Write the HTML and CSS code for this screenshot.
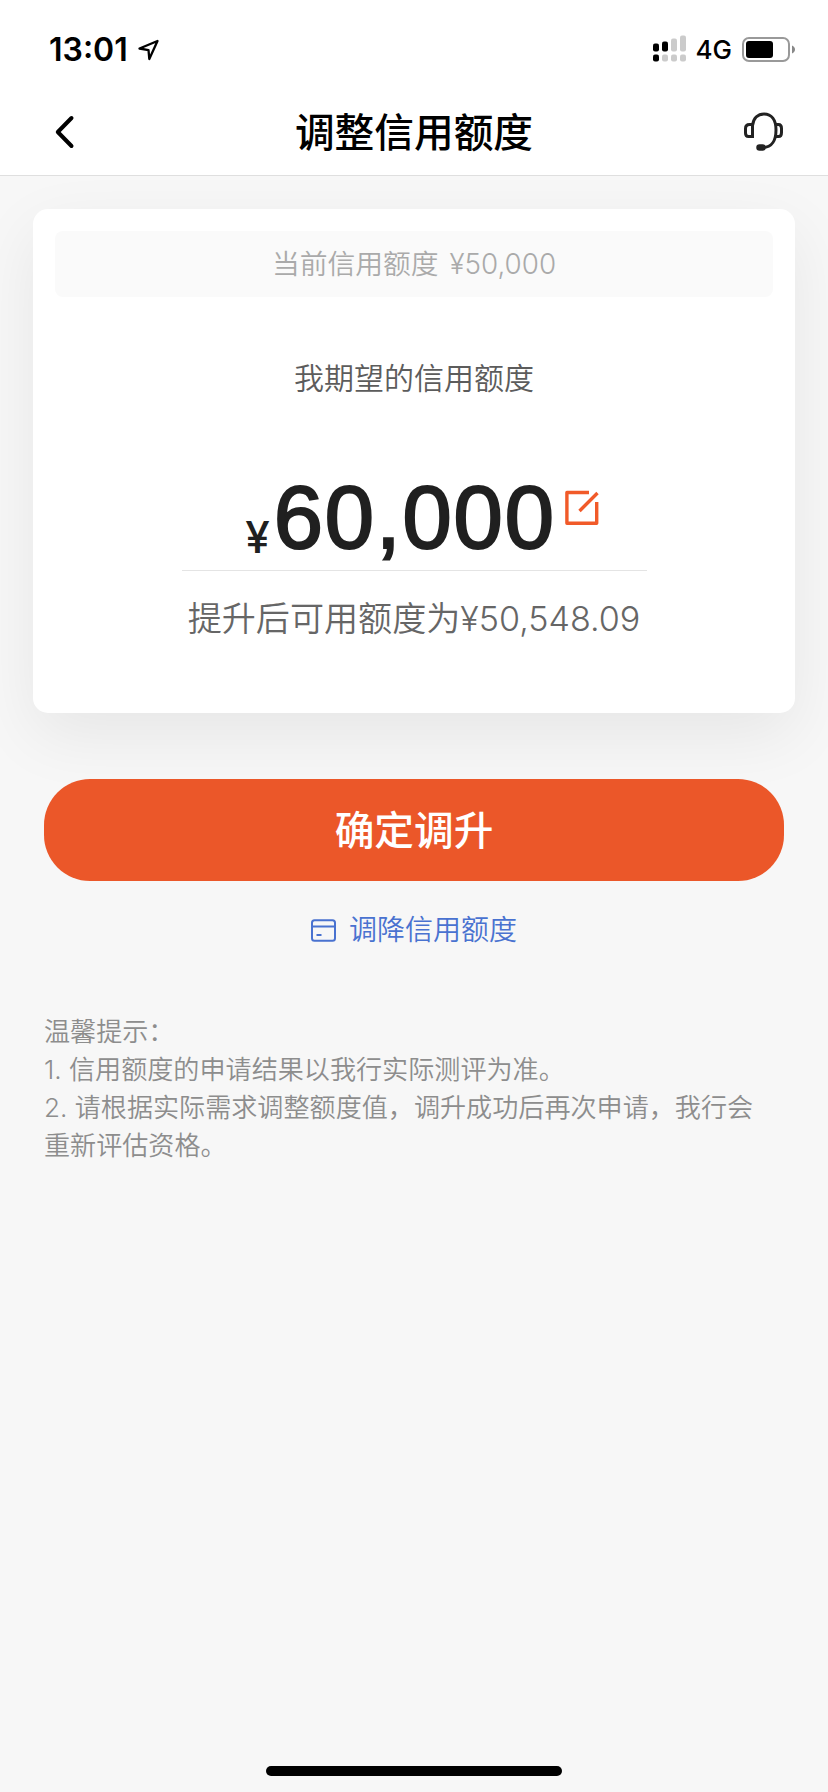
FILE: index.html
```
<!DOCTYPE html>
<html lang="zh-CN">
<head>
<meta charset="utf-8">
<title>调整信用额度</title>
<link rel="stylesheet" href="styles.css">
</head>
<body>
<div class="screen">
  <header class="top">
    <div class="status">
      <div class="status-left">
        <span class="time">13:01</span>
        <svg class="location" width="24" height="24" viewBox="0 0 24 24"><path d="M20.5 3 2.5 10.5 11.5 12.2 12.3 21Z" fill="none" stroke="#000" stroke-width="2.3" stroke-linejoin="round"/></svg>
      </div>
      <div class="status-right">
        <svg class="signal" width="34" height="27" viewBox="0 0 34 27">
          <g fill="#000"><rect x="0" y="8.5" width="6" height="8" rx="2"/><rect x="9" y="6.5" width="6" height="10" rx="2"/><rect x="0" y="19.5" width="6" height="7" rx="2"/></g>
          <g fill="#cbcbcb"><rect x="18" y="3.5" width="6" height="13" rx="2"/><rect x="27" y="0.5" width="6" height="16" rx="2"/><rect x="9" y="19.5" width="6" height="7" rx="2"/><rect x="18" y="19.5" width="6" height="7" rx="2"/><rect x="27" y="19.5" width="6" height="7" rx="2"/></g>
        </svg>
        <span class="network">4G</span>
        <svg width="54" height="26" viewBox="0 0 54 26"><rect x="1" y="1" width="46" height="23" rx="6" fill="none" stroke="#999" stroke-width="2"/><rect x="4" y="4" width="27" height="17" rx="3" fill="#000"/><path d="M50 8.5C54 10 54 15 50 16.5Z" fill="#888"/></svg>
      </div>
    </div>
    <nav class="nav">
      <svg class="back" width="22" height="34" viewBox="0 0 22 34"><path d="M18.5 3 4.8 17 18.5 31" fill="none" stroke="#000" stroke-width="4" stroke-linecap="round" stroke-linejoin="round"/></svg>
      <h1 class="title">调整信用额度</h1>
      <svg class="service" width="42" height="42" viewBox="0 0 42 42" fill="none" stroke="#222" stroke-width="3"><path d="M9.5 14.5C10.5 7 15 3 21 3 28.5 3 33 9 33 19 33 29 29 36.5 20 36.5"/><path d="M9.5 13.5H6.5Q2.5 13.5 2.5 17.5V22Q2.5 25.5 5.5 25.5H9.5Z"/><path d="M33 13.5H35.5Q38.5 13.5 38.5 17.5V21.5Q38.5 25.5 35.5 25.5H32.5"/><rect x="14" y="34" width="8" height="5" rx="2.5" fill="#222" stroke-width="1.5"/></svg>
    </nav>
  </header>
  <main class="content">
    <section class="card">
      <div class="current">当前信用额度 ¥50,000</div>
      <div class="label">我期望的信用额度</div>
      <div class="amount">
        <span class="currency">¥</span><span class="value">60,000</span>
        <svg class="edit" width="34" height="36" viewBox="0 0 34 36" fill="none" stroke="#f15a29" stroke-width="3.4" stroke-linecap="butt" stroke-linejoin="round"><path d="M24 2.5H1.9V33.2H31.7V12"/><path d="M14.5 21 32.5 3"/></svg>
      </div>
      <div class="available">提升后可用额度为¥50,548.09</div>
    </section>
    <button class="confirm">确定调升</button>
    <a class="lower"><svg width="25" height="23" viewBox="0 0 25 23" fill="none" stroke="#4972d0" stroke-width="2"><rect x="1" y="1.2" width="23" height="20.6" rx="2.5"/><path d="M1 7.5H24M5.5 16H10.5"/></svg><span>调降信用额度</span></a>
    <div class="tips">
      <p>温馨提示：</p>
      <p>1. 信用额度的申请结果以我行实际测评为准。</p>
      <p>2. 请根据实际需求调整额度值，调升成功后再次申请，我行会重新评估资格。</p>
    </div>
  </main>
  <div class="home-bar"></div>
</div>
</body>
</html>
```
FILE: styles.css
```
* { box-sizing: border-box; }
body {
  margin: 0;
  background: #f7f7f7;
  font-family: Inter, "Noto Sans CJK SC", sans-serif;
}
h1, p { margin: 0; }
svg { display: block; flex: none; }
.screen {
  display: flex;
  flex-direction: column;
  height: 1792px;
  overflow: hidden;
}
.top {
  height: 176px;
  background: #fff;
  border-bottom: 1px solid #dfdfdf;
}
.status {
  display: flex;
  justify-content: space-between;
  height: 88px;
  padding: 12px 32px 0 49px;
}
.status-left, .status-right { display: flex; align-items: center; }
.time { font-size: 32px; font-weight: 600; line-height: 36px; }
.location { margin-left: 9px; }
.signal { margin-bottom: 3px; }
.network { margin: 0 10px 0 9px; font-size: 26px; font-weight: 500; line-height: 32px; }
.nav {
  display: grid;
  grid-template-columns: 60px 1fr 60px;
  align-items: center;
  height: 87px;
  padding: 0 43px 0 53px;
}
.title { margin-left: -10px; padding-top: 2px; text-align: center; font-size: 39.7px; font-weight: 500; line-height: 58px; white-space: nowrap; }
.service { justify-self: end; }
.content { flex: 1; padding: 33px 33px 0; }
.card {
  display: flex;
  flex-direction: column;
  align-items: center;
  height: 504px;
  padding: 22px;
  background: #fff;
  border-radius: 15px;
  box-shadow: 0 22px 66px rgba(0, 0, 0, 0.07);
}
.current {
  width: 100%;
  height: 66px;
  border-radius: 8px;
  background: #fafafa;
  color: #aaa;
  font-size: 27.8px;
  font-weight: 350;
  line-height: 67px;
  text-align: center;
  word-spacing: 3px;
}
.label { margin-top: 61px; color: #5c5c5c; font-size: 30px; font-weight: 350; line-height: 40px; }
.amount {
  display: flex;
  justify-content: center;
  width: 465px;
  height: 112px;
  margin-top: 61px;
  padding-left: 16px;
  border-bottom: 1px solid #e4e4e4;
  color: #202020;
  line-height: 100px;
}
.currency { padding-top: 28px; font-size: 44px; font-weight: 500; }
.value {
  margin-left: 4px;
  padding-top: 9px;
  font-family: "Liberation Sans", sans-serif;
  font-size: 88.5px;
  letter-spacing: 1.9px;
  -webkit-text-stroke: 2.2px #202020;
}
.edit { margin: 31px 0 0 9px; }
.available { margin-top: 24px; color: #666; font-size: 34.1px; font-weight: 350; line-height: 48px; white-space: nowrap; }
.confirm {
  display: block;
  width: 740px;
  height: 102px;
  margin: 66px auto 0;
  padding: 0;
  border: 0;
  border-radius: 46px;
  background: #eb5729;
  color: #fff;
  font: 500 39.7px/105px Inter, "Noto Sans CJK SC", sans-serif;
}
.lower {
  display: flex;
  justify-content: center;
  align-items: center;
  gap: 13px;
  height: 40px;
  margin-top: 29px;
  color: #4972d0;
  font-size: 28px;
  font-weight: 350;
}
.lower span { line-height: 38px; }
.tips {
  margin: 63px 28px 0 11px;
  color: #8d8d8d;
  font-size: 26.1px;
  font-weight: 350;
  line-height: 38px;
}
.home-bar { width: 296px; height: 10px; margin: 0 auto 16px; border-radius: 5px; background: #000; }
```
